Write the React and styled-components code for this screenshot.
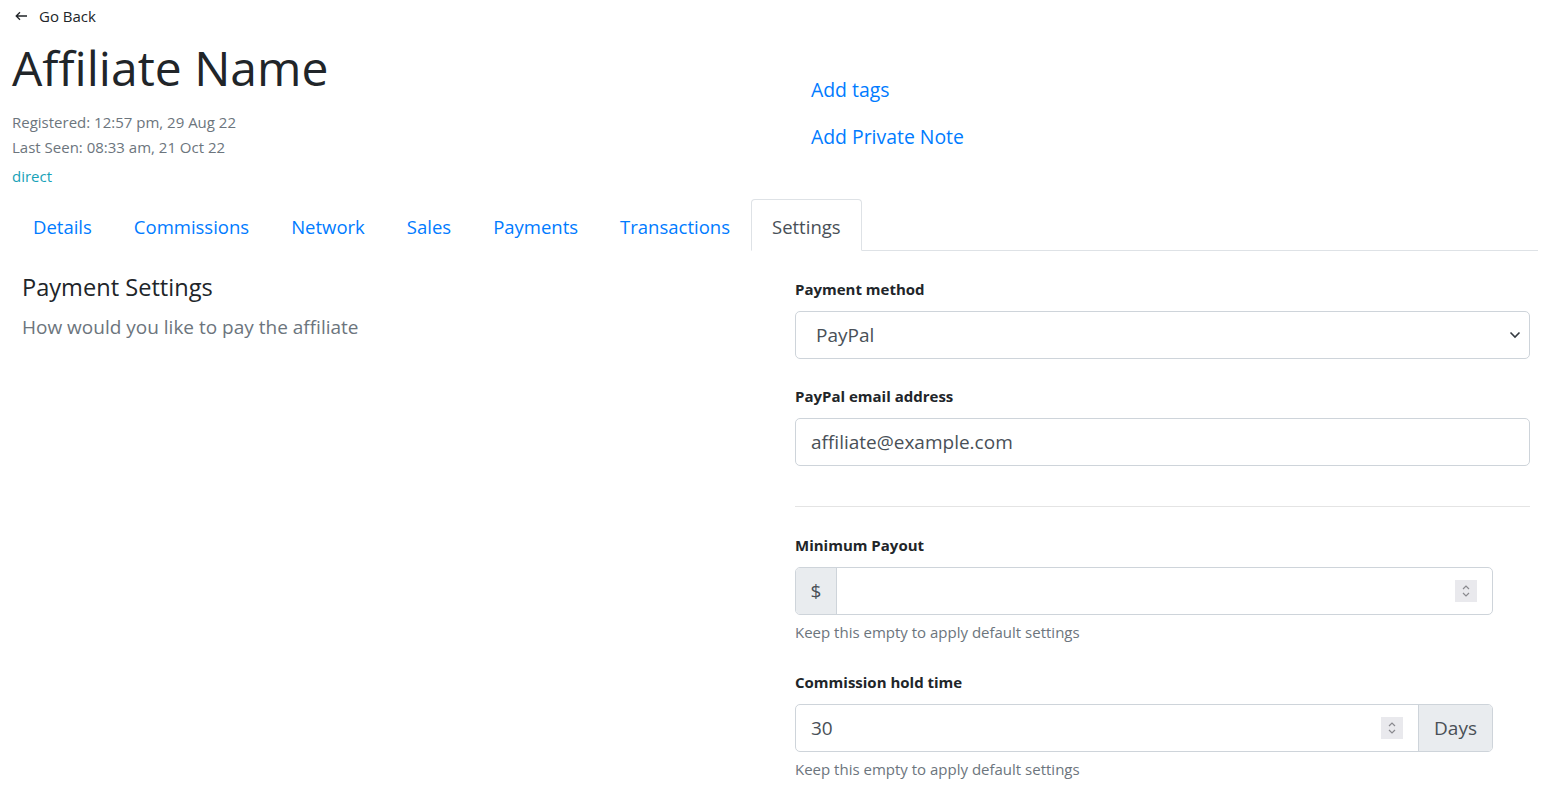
import styled, { createGlobalStyle } from "styled-components"

const GlobalStyle = createGlobalStyle`
  body {
    margin: 0;
    font-family: "Open Sans", "Noto Sans", sans-serif;
    color: #212529;
    background: #fff;
  }
  * { box-sizing: border-box; }
`

const Page = styled.div`
  padding: 5px 4px 0 12px;
`
const Header = styled.div`
  display: grid;
  grid-template-columns: 783px 1fr;
`
const HeaderLeft = styled.div``
const HeaderRight = styled.div`
  padding: 70px 0 0 16px;
  display: flex;
  flex-direction: column;
  align-items: flex-start;
  gap: 17px;
`
const BackLink = styled.a`
  display: flex;
  align-items: center;
  gap: 12px;
  padding-left: 3px;
  font-size: 15px;
  line-height: 22px;
  color: #212529;
  text-decoration: none;
`
const Title = styled.h1`
  margin: 12px 0 0;
  font-size: 48px;
  font-weight: 400;
  line-height: 57.6px;
`
const Meta = styled.div`
  margin-top: ${p => p.$top || 0}px;
  font-size: 15px;
  line-height: 25px;
  color: ${p => p.$info ? "#17a2b8" : "#6c757d"};
`
const HeaderLink = styled.a`
  font-size: 19.4px;
  line-height: 30px;
  color: #007bff;
  text-decoration: none;
`
const Tabs = styled.ul`
  display: flex;
  list-style: none;
  margin: 10px 0 0;
  padding: 0;
  border-bottom: 1px solid #dee2e6;
`
const Tab = styled.li`
  margin-bottom: -1px;
  padding: 12px 20px 8px;
  font-size: 18.5px;
  line-height: 30px;
  border: 1px solid ${p => p.$active ? "#dee2e6" : "transparent"};
  border-bottom-color: ${p => p.$active ? "#fff" : "transparent"};
  border-radius: 4px 4px 0 0;
  background: #fff;
  color: ${p => p.$active ? "#495057" : "#007bff"};
`
const Content = styled.div`
  display: grid;
  grid-template-columns: 783px 1fr;
`
const Intro = styled.div`
  padding: 22px 10px;
`
const SectionTitle = styled.h2`
  margin: 0;
  font-size: 23.6px;
  font-weight: 400;
  line-height: 29px;
`
const SectionText = styled.p`
  margin: 10px 0 0;
  font-size: 19px;
  line-height: 30px;
  color: #6c757d;
`
const Form = styled.div`
  padding: 27px 8px 0 0;
`
const Group = styled.div`
  margin-bottom: ${p => p.$gap || 26}px;
`
const Label = styled.label`
  display: block;
  margin-bottom: 11px;
  font-size: 15px;
  font-weight: 700;
  line-height: 22px;
`
const Select = styled.div`
  display: flex;
  align-items: center;
  justify-content: space-between;
  height: 48px;
  padding: 0 8px 0 20px;
  border: 1px solid #ced4da;
  border-radius: 5px;
  font-size: 19px;
  color: #495057;
`
const TextInput = styled.input`
  display: block;
  width: 100%;
  height: 48px;
  margin-top: 1px;
  padding: 0 15px;
  border: 1px solid #ced4da;
  border-radius: 5px;
  font: inherit;
  font-size: 19px;
  color: #495057;
  outline: none;
`
const Divider = styled.hr`
  margin: 40px 0 27px;
  border: 0;
  border-top: 1px solid #e4e4e4;
`
const InputGroup = styled.div`
  display: flex;
  width: 698px;
  height: 48px;
  border: 1px solid #ced4da;
  border-radius: 5px;
  overflow: hidden;
`
const Addon = styled.span`
  display: flex;
  align-items: center;
  justify-content: center;
  width: ${p => p.$w}px;
  background: #e9ecef;
  font-size: 19px;
  color: #495057;
  border-right: ${p => p.$left ? "1px solid #ced4da" : "0"};
  border-left: ${p => p.$left ? "0" : "1px solid #ced4da"};
`
const NumberField = styled.div`
  flex: 1;
  display: flex;
  align-items: center;
  padding: 0 15px;
`
const NumberInput = styled.input`
  flex: 1;
  min-width: 0;
  border: 0;
  outline: none;
  font: inherit;
  font-size: 19px;
  color: #495057;
  padding: 0;
  appearance: textfield;
  &::-webkit-inner-spin-button,
  &::-webkit-outer-spin-button { -webkit-appearance: none; margin: 0; }
`
const Spinner = styled.span`
  display: flex;
  width: 22px;
  height: 22px;
  background: #e9e9ed;
  align-items: center;
  justify-content: center;
`
const Help = styled.div`
  margin-top: 6px;
  font-size: 15px;
  line-height: 22px;
  color: #6c757d;
`

const tabs = ["Details", "Commissions", "Network", "Sales", "Payments", "Transactions", "Settings"]

const SpinIcon = () => (
  <Spinner>
    <svg width="10" height="16" viewBox="0 0 10 16" fill="none" stroke="#8a8a8f" strokeWidth="1.2">
      <path d="M2 6l3-3 3 3M2 10l3 3 3-3" />
    </svg>
  </Spinner>
)

const App = () => {
  return (
    <Page>
      <GlobalStyle />
      <Header>
        <HeaderLeft>
          <BackLink href="#">
            <svg width="12" height="10" viewBox="0 0 12 10" fill="none" stroke="#212529" strokeWidth="1.3">
              <path d="M12 5H1.5M5 1.2L1.2 5 5 8.8" />
            </svg>
            Go Back
          </BackLink>
          <Title>Affiliate Name</Title>
          <Meta $top={13}>Registered: 12:57 pm, 29 Aug 22</Meta>
          <Meta>Last Seen: 08:33 am, 21 Oct 22</Meta>
          <Meta $top={4} $info>direct</Meta>
        </HeaderLeft>
        <HeaderRight>
          <HeaderLink href="#">Add tags</HeaderLink>
          <HeaderLink href="#">Add Private Note</HeaderLink>
        </HeaderRight>
      </Header>
      <Tabs>
        {tabs.map(t => <Tab key={t} $active={t === "Settings"}>{t}</Tab>)}
      </Tabs>
      <Content>
        <Intro>
          <SectionTitle>Payment Settings</SectionTitle>
          <SectionText>How would you like to pay the affiliate</SectionText>
        </Intro>
        <Form>
          <Group>
            <Label>Payment method</Label>
            <Select>
              PayPal
              <svg width="12" height="8" viewBox="0 0 12 8" fill="none" stroke="#343a40" strokeWidth="1.6">
                <path d="M1.5 1.5L6 6l4.5-4.5" />
              </svg>
            </Select>
          </Group>
          <Group>
            <Label>PayPal email address</Label>
            <TextInput defaultValue="affiliate@example.com" />
          </Group>
          <Divider />
          <Group $gap={28}>
            <Label>Minimum Payout</Label>
            <InputGroup>
              <Addon $w={41} $left>$</Addon>
              <NumberField>
                <NumberInput type="number" />
                <SpinIcon />
              </NumberField>
            </InputGroup>
            <Help>Keep this empty to apply default settings</Help>
          </Group>
          <Group>
            <Label>Commission hold time</Label>
            <InputGroup>
              <NumberField>
                <NumberInput type="number" defaultValue="30" />
                <SpinIcon />
              </NumberField>
              <Addon $w={74}>Days</Addon>
            </InputGroup>
            <Help>Keep this empty to apply default settings</Help>
          </Group>
        </Form>
      </Content>
    </Page>
  )
}

export default App
